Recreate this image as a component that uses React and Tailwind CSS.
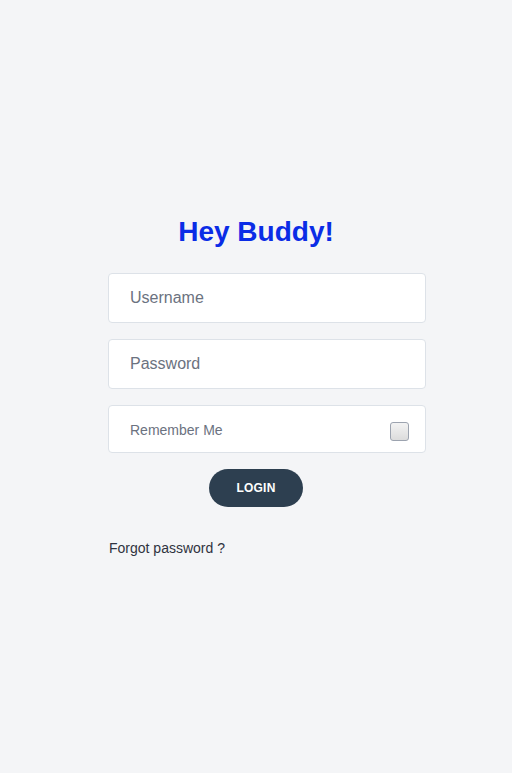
export default function App() {
  return (
    <div
      className="min-h-screen bg-[#f4f5f7] flex flex-col items-center"
      style={{ fontFamily: '"Liberation Sans", Arial, sans-serif' }}
    >
      <h1 className="mt-[215px] text-center text-[28px] leading-[34px] font-bold text-[#0a2ce6]">
        Hey Buddy!
      </h1>

      {/* form column sits a bit right of the page centre */}
      <div className="w-[340px] pl-[22px]">
        <div className="w-[318px] flex flex-col">
          <input
            type="text"
            placeholder="Username"
            className="mt-[24px] h-[50px] w-full rounded border border-[#dde2e8] bg-white px-[21px] text-[16px] text-[#4b5563] placeholder:text-[#6b7280] outline-none"
          />
          <input
            type="password"
            placeholder="Password"
            className="mt-[16px] h-[50px] w-full rounded border border-[#dde2e8] bg-white px-[21px] text-[16px] text-[#4b5563] placeholder:text-[#6b7280] outline-none"
          />

          <label className="mt-[16px] h-[48px] w-full rounded border border-[#dde2e8] bg-white pl-[21px] pr-[16px] flex items-center justify-between">
            <span className="text-[14px] text-[#6b7280] mt-[2px]">Remember Me</span>
            <span className="w-[19px] h-[19px] mt-[4px] rounded-[3px] border border-[#9ca3af] bg-gradient-to-b from-[#f3f3f3] to-[#dcdcdc]" />
          </label>

          <div className="flex justify-center mt-[16px] pr-[22px]">
            <button className="w-[94px] h-[38px] rounded-full bg-[#2d3f50] text-white text-[12px] font-bold tracking-[0.2px]">
              LOGIN
            </button>
          </div>

          <a className="mt-[31px] ml-[1px] text-[14px] text-[#2f3340] leading-[20px] cursor-pointer">
            Forgot password ?
          </a>
        </div>
      </div>
    </div>
  );
}
